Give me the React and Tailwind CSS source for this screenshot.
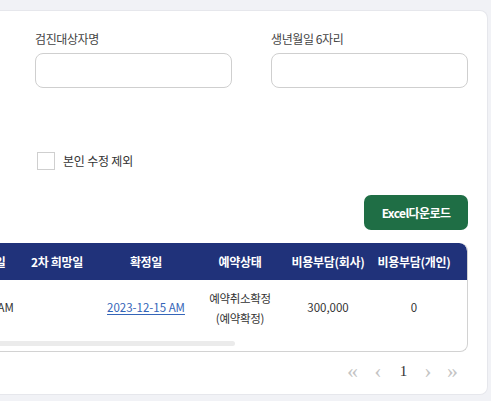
import { useState } from 'react';

const FONT = { fontFamily: '"Noto Sans CJK KR", "Noto Sans", sans-serif' };

const COLS = 'grid-cols-[76px_90px_88px_100px_76px_96px]';

const HEADERS = ['1차 희망일', '2차 희망일', '확정일', '예약상태', '비용부담(회사)', '비용부담(개인)'];

export default function App() {
  const [excludeSelf, setExcludeSelf] = useState(false);

  return (
    <div className="h-[401px] w-[491px] overflow-hidden bg-[#f1f2f6] pt-[10px] pr-[3px] flex" style={FONT}>
      <div className="flex-1 h-[385px] bg-white rounded-r-[8px] border border-l-0 border-[#e6e7ec] pl-[35px] pr-[19px] pt-[19px] flex flex-col">
        {/* Search fields */}
        <div className="grid grid-cols-2 gap-x-[39px]">
          <div>
            <label className="block h-[17px] text-[12px] leading-[17px] text-[#444] tracking-[-0.4px]">검진대상자명</label>
            <input className="mt-[6px] w-full h-[35px] rounded-[8px] border border-[#cfcfcf] outline-none px-3 text-[12px]" />
          </div>
          <div>
            <label className="block h-[17px] text-[12px] leading-[17px] text-[#444] tracking-[-0.4px]">생년월일 6자리</label>
            <input className="mt-[6px] w-full h-[35px] rounded-[8px] border border-[#cfcfcf] outline-none px-3 text-[12px]" />
          </div>
        </div>

        {/* Checkbox */}
        <label className="mt-[64px] ml-[2px] flex items-center gap-[8px] h-[18px] cursor-pointer">
          <span
            onClick={() => setExcludeSelf(!excludeSelf)}
            className="w-[18px] h-[18px] border border-[#cfcfcf] bg-white"
          />
          <span className="text-[12px] text-[#333] tracking-[-0.2px]">본인 수정 제외</span>
        </label>

        {/* Excel button */}
        <div className="mt-[25px] flex justify-end">
          <button className="w-[104px] h-[35px] rounded-[7px] bg-[#1f6e45] text-white text-[12px] font-bold tracking-[-0.6px]">
            Excel다운로드
          </button>
        </div>

        {/* Table */}
        <div className="mt-[13px] -ml-[45px] h-[109px] rounded-r-[8px] border-r border-b border-[#d2d2d2] overflow-hidden">
          <div className="h-[37px] bg-[#20327a] rounded-tr-[8px] overflow-hidden">
            <div className={`-ml-[54px] grid ${COLS} h-full items-center`}>
              {HEADERS.map((h, i) => (
                <div
                  key={h}
                  className={`text-center whitespace-nowrap text-[12px] font-bold text-white tracking-[-0.3px] ${i === 0 ? 'pl-[11px]' : ''}`}
                >
                  {h}
                </div>
              ))}
            </div>
          </div>
          <div className="h-[55px] overflow-hidden">
            <div className={`-ml-[54px] grid ${COLS} h-full items-center text-[11.5px] text-[#333]`}>
              <div className="text-center whitespace-nowrap">2023-12-15 AM</div>
              <div />
              <div className="text-center whitespace-nowrap">
                <a href="#" className="text-[#3465b8] underline underline-offset-2">2023-12-15 AM</a>
              </div>
              <div className="text-center leading-[20px] tracking-[-0.3px]">
                예약취소확정
                <br />
                (예약확정)
              </div>
              <div className="text-center">300,000</div>
              <div className="text-center">0</div>
            </div>
          </div>
          <div className="mt-[6px] h-[5px] w-[245px] bg-[#ebebeb] rounded-r-full" />
        </div>

        {/* Pagination */}
        <div
          className="mt-[8px] h-[22px] flex items-center justify-end pr-[3px] text-[22px] leading-none text-[#c4c4c4]"
          style={{ fontFamily: '"Liberation Serif", serif' }}
        >
          <span className="w-[25px] text-center">«</span>
          <span className="w-[26px] text-center">‹</span>
          <span className="w-[25px] text-center text-[15px] text-[#333]">1</span>
          <span className="w-[24px] text-center">›</span>
          <span className="w-[25px] text-center">»</span>
        </div>
      </div>
    </div>
  );
}
